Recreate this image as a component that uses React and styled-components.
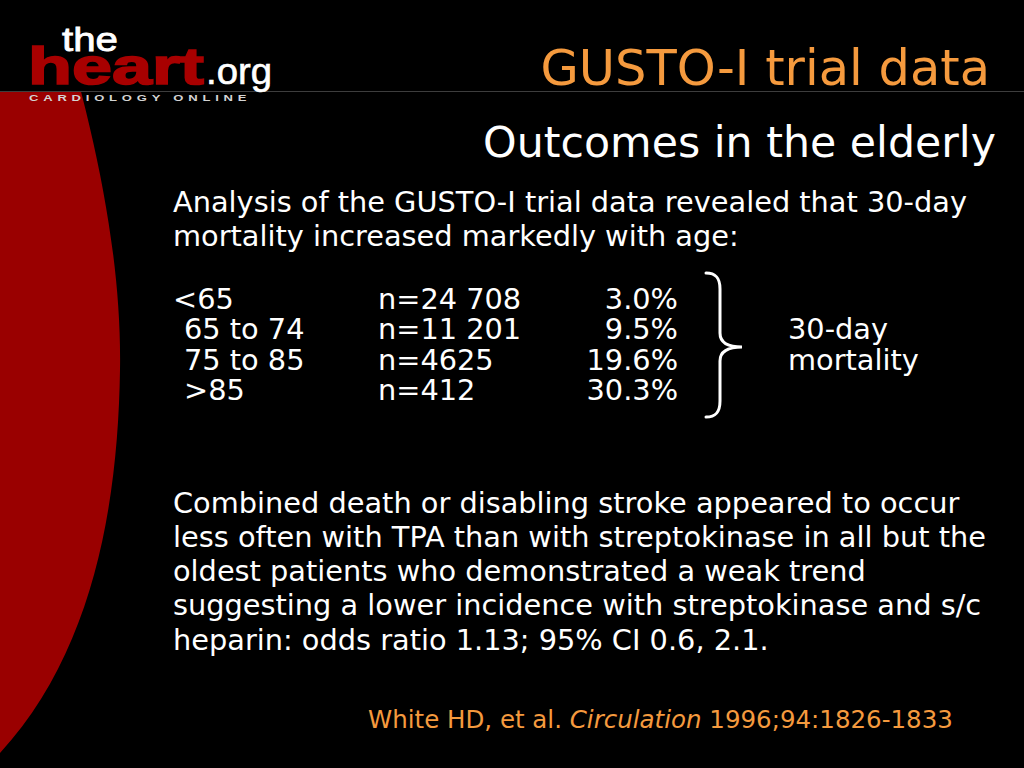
import React from "react";
import styled, { createGlobalStyle } from "styled-components";

const Global = createGlobalStyle`
  html, body { margin: 0; padding: 0; background: #000; }
  body { font-family: "DejaVu Sans", Verdana, sans-serif; }
`;

const ORANGE = "#f59a3e";

const Slide = styled.div`
  position: relative;
  width: 1024px;
  height: 768px;
  overflow: hidden;
  background: #000;
  color: #fff;
  font-family: "DejaVu Sans", Verdana, sans-serif;
`;

const Backdrop = styled.svg`
  position: absolute;
  left: 0;
  top: 0;
  z-index: 0;
`;

const Header = styled.header`
  position: relative;
  z-index: 1;
  height: 91px;
  background: #000;
  border-bottom: 1px solid #3d3d3d;
  display: flex;
  justify-content: space-between;
  align-items: flex-start;
`;

const Logo = styled.svg`
  display: block;
  flex: none;
  overflow: visible;
`;

const Title = styled.h1`
  align-self: flex-end;
  margin: 0 34px -2px 0;
  font-size: 49.5px;
  font-weight: normal;
  line-height: 1;
  color: ${ORANGE};
`;

const Main = styled.main`
  position: relative;
  z-index: 1;
  display: flex;
  flex-direction: column;
  padding-left: 173px;
`;

const Subtitle = styled.h2`
  align-self: flex-end;
  margin: 26px 28px 0 0;
  font-size: 42.7px;
  font-weight: normal;
  line-height: 49px;
`;

const Para = styled.p`
  margin: ${(p) => p.$top}px 0 0;
  font-size: 28.8px;
  line-height: 34.3px;
`;

const DataBlock = styled.section`
  margin-top: 17px;
  display: flex;
  align-items: center;
`;

const Table = styled.div`
  display: grid;
  grid-template-columns: 205px 150px 150px;
  font-size: 28.8px;
  line-height: 30.5px;
`;

const Age = styled.div`
  padding-left: ${(p) => (p.$indent ? 11 : 0)}px;
`;

const Count = styled.div``;

const Pct = styled.div`
  text-align: right;
`;

const Brace = styled.svg`
  display: block;
  margin-left: 26px;
  flex: none;
`;

const BraceLabel = styled.div`
  margin-left: 42px;
  font-size: 28.8px;
  line-height: 30.5px;
`;

const Footer = styled.footer`
  margin: 50px 0 0 195px;
  font-size: 24.5px;
  line-height: 26px;
  color: ${ORANGE};
  em { font-style: italic; }
`;

const rows = [
  { age: "<65", indent: false, n: "n=24 708", pct: "3.0%" },
  { age: "65 to 74", indent: true, n: "n=11 201", pct: "9.5%" },
  { age: "75 to 85", indent: true, n: "n=4625", pct: "19.6%" },
  { age: ">85", indent: true, n: "n=412", pct: "30.3%" },
];

export default function App() {
  return (
    <>
      <Global />
      <Slide>
        <Backdrop width="200" height="768" viewBox="0 0 200 768" aria-hidden="true">
          <path
            d="M0,0 L55,0 C92,120 122,250 120,370 C118,500 95,650 0,753 Z"
            fill="#9a0000"
          />
        </Backdrop>
        <Header>
          <Logo width="280" height="106" viewBox="0 0 280 106" aria-label="theheart.org">
            <text
              x="62"
              y="51"
              fill="#fff"
              fontFamily="Liberation Sans, Arial, sans-serif"
              fontSize="33"
              stroke="#fff"
              strokeWidth="0.8"
              textLength="56"
              lengthAdjust="spacingAndGlyphs"
            >
              the
            </text>
            <text
              x="28"
              y="84"
              fill="#a80000"
              stroke="#a80000"
              strokeWidth="1.6"
              fontFamily="Liberation Sans, Arial, sans-serif"
              fontWeight="bold"
              fontSize="52"
              textLength="176"
              lengthAdjust="spacingAndGlyphs"
            >
              heart
            </text>
            <text
              x="206"
              y="84"
              fill="#fff"
              stroke="#fff"
              strokeWidth="0.6"
              fontFamily="Liberation Sans, Arial, sans-serif"
              fontSize="37"
              textLength="66"
              lengthAdjust="spacingAndGlyphs"
            >
              .org
            </text>
            <g transform="translate(29 101) scale(1.45 1)">
              <text
                x="0"
                y="0"
                fill="#d4d4d4"
                fontFamily="Liberation Sans, Arial, sans-serif"
                fontWeight="bold"
                fontSize="9"
                textLength="150"
                lengthAdjust="spacing"
              >
                CARDIOLOGY ONLINE
              </text>
            </g>
          </Logo>
          <Title>GUSTO-I trial data</Title>
        </Header>
        <Main>
          <Subtitle>Outcomes in the elderly</Subtitle>
          <Para $top={18}>
            Analysis of the GUSTO-I trial data revealed that 30-day
            <br />
            mortality increased markedly with age:
          </Para>
          <DataBlock>
            <Table>
              {rows.map((r) => (
                <React.Fragment key={r.age}>
                  <Age $indent={r.indent}>{r.age}</Age>
                  <Count>{r.n}</Count>
                  <Pct>{r.pct}</Pct>
                </React.Fragment>
              ))}
            </Table>
            <Brace width="42" height="148" viewBox="0 0 42 148" aria-hidden="true">
              <path
                d="M2,2 C12,2 16,7 16,18 L16,62 C16,71 22,76 38,76 C22,76 16,81 16,90 L16,130 C16,141 12,146 2,146"
                fill="none"
                stroke="#fff"
                strokeWidth="3"
                strokeLinecap="round"
              />
            </Brace>
            <BraceLabel>
              30-day
              <br />
              mortality
            </BraceLabel>
          </DataBlock>
          <Para $top={67}>
            Combined death or disabling stroke appeared to occur
            <br />
            less often with TPA than with streptokinase in all but the
            <br />
            oldest patients who demonstrated a weak trend
            <br />
            suggesting a lower incidence with streptokinase and s/c
            <br />
            heparin: odds ratio 1.13; 95% CI 0.6, 2.1.
          </Para>
          <Footer>
            White HD, et al. <em>Circulation</em> 1996;94:1826-1833
          </Footer>
        </Main>
      </Slide>
    </>
  );
}
